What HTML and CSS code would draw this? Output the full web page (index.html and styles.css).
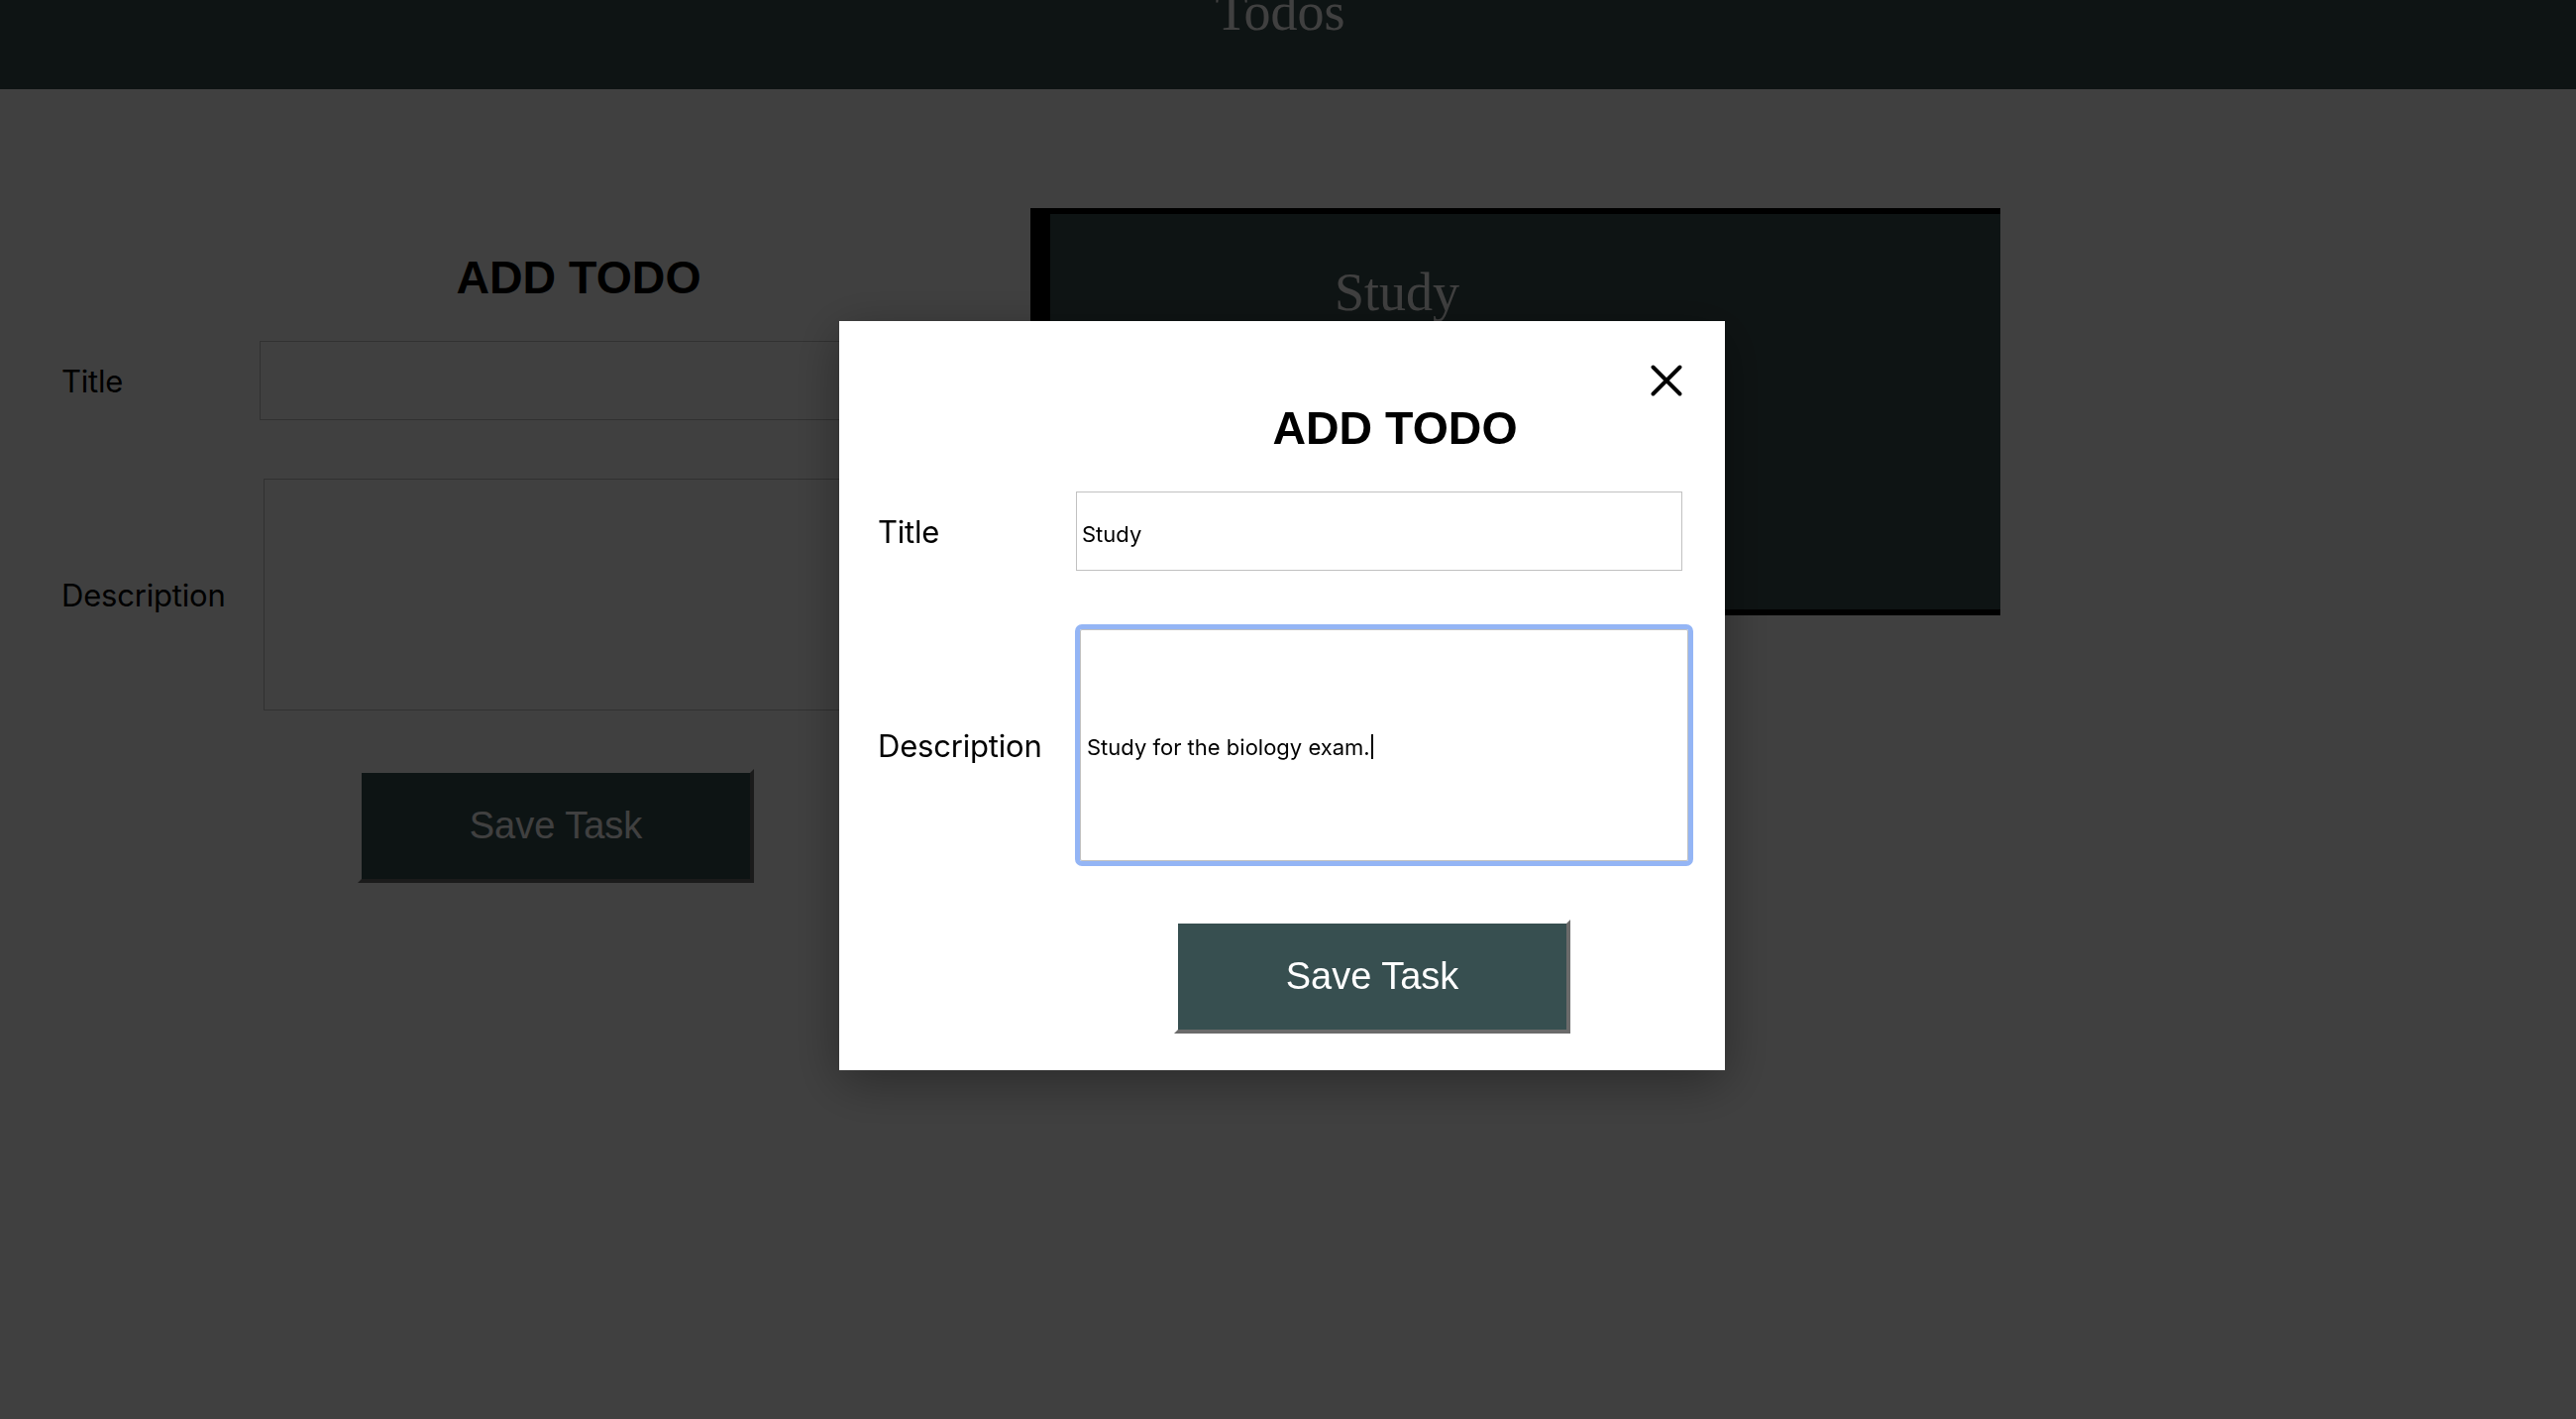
FILE: index.html
```html
<!DOCTYPE html>
<html lang="en">
<head>
<meta charset="utf-8">
<title>Todos</title>
<link rel="stylesheet" href="styles.css">
</head>
<body>
<header class="topbar">
  <h1 class="brand">Todos</h1>
</header>
<main class="page">
  <form class="todo-form page-form">
    <h2 class="form-title">ADD TODO</h2>
    <div class="row">
      <label class="label">Title</label>
      <input class="field" type="text">
    </div>
    <div class="row">
      <label class="label">Description</label>
      <textarea class="field area"></textarea>
    </div>
    <button class="save" type="button">Save Task</button>
  </form>
  <section class="card">
    <h2 class="card-title">Study</h2>
  </section>
</main>
<div class="overlay">
  <div class="modal">
    <div class="modal-top">
      <button class="close" type="button" aria-label="Close">
        <svg width="32" height="32" viewBox="0 0 32 32"><path d="M2.5 2.5L29.5 29.5M29.5 2.5L2.5 29.5" stroke="#000" stroke-width="3.9" stroke-linecap="round" fill="none"/></svg>
      </button>
    </div>
    <form class="todo-form">
      <h2 class="form-title">ADD TODO</h2>
      <div class="row">
        <label class="label">Title</label>
        <input class="field" type="text" value="Study">
      </div>
      <div class="row">
        <label class="label">Description</label>
        <div class="field area focused" role="textbox">Study for the biology exam.<span class="caret"></span></div>
      </div>
      <button class="save" type="button">Save Task</button>
    </form>
  </div>
</div>
</body>
</html>
```
FILE: styles.css
```css
html, body {
  margin: 0;
  padding: 0;
  background: #fff;
}

body {
  font-family: "Inter", "Liberation Sans", sans-serif;
}

.topbar {
  height: 90px;
  background: #3b5050;
  overflow: hidden;
}

.brand {
  margin: -19px 0 0;
  padding-right: 16px;
  font: 400 54px/62px "Liberation Serif", serif;
  color: #fff;
  text-align: center;
}

.page {
  display: flex;
  align-items: flex-start;
  padding-left: 62px;
}

.todo-form {
  flex: none;
  width: 812px;
  display: flex;
  flex-direction: column;
  margin: 0;
}

.page-form {
  padding-top: 162px;
}

.form-title {
  margin: 0 0 36px;
  padding-left: 232px;
  text-align: center;
  font: 700 46.5px/56px "Liberation Sans", Arial, sans-serif;
  color: #000;
}

.row {
  display: flex;
  align-items: center;
  margin-bottom: 59px;
}

.label {
  flex: none;
  width: 200px;
  font: 400 31px "Inter", sans-serif;
  letter-spacing: -0.2px;
  color: #000;
}

.field {
  flex: none;
  box-sizing: border-box;
  width: 612px;
  height: 80px;
  margin: 0;
  padding: 6px 5px 0;
  border: 1px solid #c1c1c1;
  border-radius: 0;
  background: #fff;
  font: 400 22px "Inter", sans-serif;
  color: #000;
  outline: none;
  resize: none;
}

.area {
  width: 614px;
  height: 234px;
  margin-left: 4px;
  padding: 3px 6px 0;
  display: flex;
  align-items: center;
}

.focused {
  outline: 5px solid #94b5f5;
  border-radius: 2px;
}

.caret {
  display: inline-block;
  width: 2px;
  height: 25px;
  margin-left: 1px;
  background: #000;
}

.save {
  box-sizing: border-box;
  width: 400px;
  height: 115px;
  margin-left: 299px;
  padding: 0;
  background: #374f50;
  color: #fff;
  font: 400 38px "Liberation Sans", Arial, sans-serif;
  border: 4px solid;
  border-color: #fff #6b6b6b #6b6b6b #fff;
}

.card {
  flex: none;
  box-sizing: border-box;
  width: 979px;
  height: 411px;
  margin: 120px 0 0 166px;
  background: #3b5050;
  border-style: solid;
  border-color: #000;
  border-width: 6px 0 6px 20px;
}

.card-title {
  margin: 0;
  padding: 48px 0 0 287px;
  font: 400 54px/62px "Liberation Serif", serif;
  color: #fff;
}

.overlay {
  position: fixed;
  inset: 0;
  box-sizing: border-box;
  display: flex;
  align-items: flex-start;
  justify-content: flex-start;
  padding: 324px 0 0 847px;
  background: rgba(0, 0, 0, 0.75);
}

.modal {
  box-sizing: border-box;
  width: 894px;
  height: 756px;
  padding: 44px 43px 37px 39px;
  background: #fff;
  box-shadow: 0 12px 48px rgba(0, 0, 0, 0.35);
  display: flex;
  flex-direction: column;
}

.modal-top {
  display: flex;
  justify-content: flex-end;
  height: 32px;
  margin-bottom: 4px;
}

.close {
  width: 32px;
  height: 32px;
  padding: 0;
  border: 0;
  background: none;
  display: block;
}

.close svg {
  display: block;
}
```
